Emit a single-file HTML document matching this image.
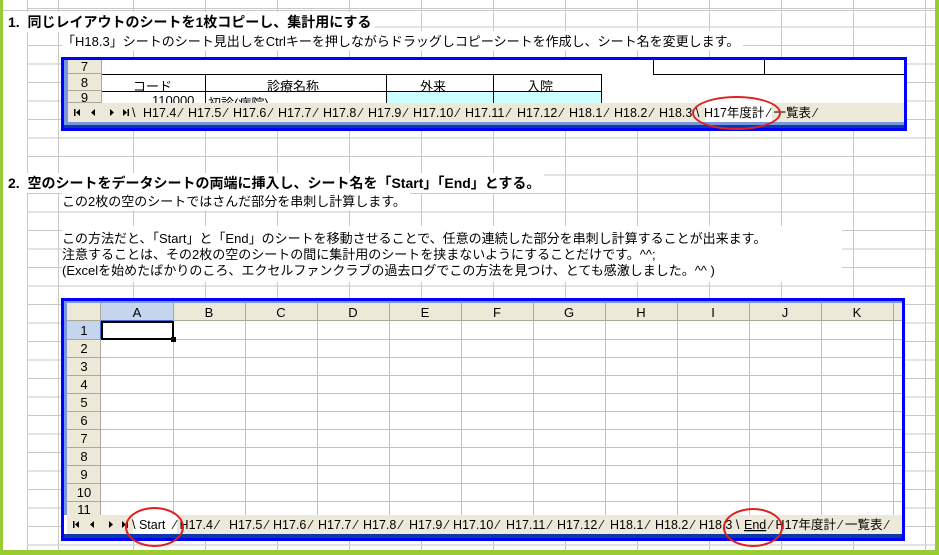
<!DOCTYPE html>
<html><head><meta charset="utf-8"><style>
body{margin:0;width:939px;height:555px;overflow:hidden;background:#fff;position:relative;font-family:"Liberation Sans","Noto Sans CJK JP",sans-serif;}
.abs{position:absolute}
.bg{position:absolute;left:0;top:0;width:939px;height:555px;
background-image:repeating-linear-gradient(to right,transparent 0,transparent 71px,#c8c8c8 71px,#c8c8c8 72px),repeating-linear-gradient(to bottom,transparent 0,transparent 17.5px,#c8c8c8 17.5px,#c8c8c8 18.5px);
background-position:62px 0,0 9px;}
.t{position:absolute;font-size:13px;color:#000;white-space:nowrap;font-family:"Liberation Sans","Noto Sans CJK JP",sans-serif}
.h{font-weight:bold;font-size:14px}
.hdr{background:#ece9d8;border-right:1px solid #aca899;border-bottom:1px solid #aca899;box-sizing:border-box;text-align:center;font-size:13px}
.ell{position:absolute;border:2px solid #e02020;border-radius:50%}
svg text{font-family:"Liberation Sans","Noto Sans CJK JP",sans-serif}
</style></head><body>
<div class="bg"></div>
<div class="abs" style="left:0;top:0;width:27px;height:555px;background:#fff"></div>
<div class="abs" style="left:27px;top:0;width:1px;height:550px;background:#c8c8c8"></div>
<div class="abs" style="left:0;top:0;width:3px;height:555px;background:#99cc33"></div>
<div class="abs" style="left:935px;top:0;width:4px;height:555px;background:#99cc33"></div>
<div class="abs" style="left:0;top:550px;width:939px;height:5px;background:#99cc33"></div>
<div class="abs" style="left:3px;top:10px;width:932px;height:1px;background:#c8c8c8"></div>

<div class="t h" style="left:8px;top:12px;background:#fff;padding-right:4px">1.&nbsp; 同じレイアウトのシートを1枚コピーし、集計用にする</div>
<div class="t" style="left:62px;top:31px;background:#fff;padding-right:4px">「H18.3」シートのシート見出しをCtrlキーを押しながらドラッグしコピーシートを作成し、シート名を変更します。</div>

<!-- top box -->
<div class="abs" style="left:61px;top:57px;width:846px;height:74px;background:#0000ff"></div>
<div class="abs" style="left:64px;top:60px;width:840px;height:68px;background:#fff"></div>
<div class="abs" style="left:64px;top:60px;width:4px;height:62px;background:#7a96df"></div>
<div class="abs hdr" style="left:68px;top:60px;width:34px;height:14px;line-height:14px">7</div>
<div class="abs hdr" style="left:68px;top:74px;width:34px;height:17px;line-height:17px">8</div>
<div class="abs hdr" style="left:68px;top:91px;width:34px;height:12px;line-height:14px;overflow:hidden">9</div>
<div class="abs" style="left:102px;top:74px;width:500px;height:1px;background:#000"></div>
<div class="abs" style="left:102px;top:91px;width:500px;height:1px;background:#000"></div>
<div class="abs" style="left:653px;top:74px;width:251px;height:1px;background:#000"></div>
<div class="abs" style="left:205px;top:74px;width:1px;height:29px;background:#000"></div>
<div class="abs" style="left:386px;top:74px;width:1px;height:29px;background:#000"></div>
<div class="abs" style="left:493px;top:74px;width:1px;height:29px;background:#000"></div>
<div class="abs" style="left:601px;top:74px;width:1px;height:29px;background:#000"></div>
<div class="abs" style="left:653px;top:60px;width:1px;height:14px;background:#000"></div>
<div class="abs" style="left:764px;top:60px;width:1px;height:14px;background:#000"></div>
<div class="abs" style="left:387px;top:92px;width:214px;height:11px;background:#ccffff"></div>
<div class="abs" style="left:493px;top:92px;width:1px;height:11px;background:#000"></div>
<div class="t" style="left:133px;top:76px">コード</div>
<div class="t" style="left:267px;top:76px">診療名称</div>
<div class="t" style="left:420px;top:76px">外来</div>
<div class="t" style="left:527px;top:76px">入院</div>
<div class="abs" style="left:102px;top:92px;width:500px;height:11px;overflow:hidden"><div class="t" style="left:50px;top:1px">110000</div><div class="t" style="left:106px;top:1px">初診(病院)</div></div>
<svg class="abs" style="left:68px;top:103px" width="836" height="19">
<rect width="836" height="19" fill="#ece9d8"/>
<g fill="#000"><rect x="6" y="6" width="1.5" height="7"/><path d="M8 9.5 L12 6 L12 13Z"/><path d="M23 9.5 L27 6 L27 13Z"/><path d="M42 6 L46 9.5 L42 13Z"/><path d="M55 6 L59 9.5 L55 13Z"/><rect x="59.5" y="6" width="1.5" height="7"/></g>
<path d="M637 0 L637 19 L704 19 L704 0" fill="#fff"/>
<g font-size="12.5" fill="#000">
<text x="64" y="14">\</text>
<text x="75" y="14">H17.4 ⁄</text><text x="120" y="14">H17.5 ⁄</text><text x="165" y="14">H17.6 ⁄</text><text x="210" y="14">H17.7 ⁄</text><text x="255" y="14">H17.8 ⁄</text><text x="300" y="14">H17.9 ⁄</text><text x="345" y="14">H17.10 ⁄</text><text x="397" y="14">H17.11 ⁄</text><text x="449" y="14">H17.12 ⁄</text><text x="501" y="14">H18.1 ⁄</text><text x="546" y="14">H18.2 ⁄</text><text x="591" y="14">H18.3 \</text><text x="636" y="14">H17年度計</text><text x="700" y="14">⁄ 一覧表 ⁄</text>
</g></svg>
<div class="abs" style="left:64px;top:122px;width:840px;height:3px;background:#7a96df"></div>
<div class="abs" style="left:64px;top:125px;width:840px;height:3px;background:#0a3aa8"></div>
<div class="ell" style="left:692px;top:96px;width:85px;height:30px"></div>

<div class="t h" style="left:8px;top:173px;background:#fff;padding-right:4px">2.&nbsp; 空のシートをデータシートの両端に挿入し、シート名を「Start」「End」とする。</div>
<div class="t" style="left:62px;top:191px;background:#fff;padding-right:4px">この2枚の空のシートではさんだ部分を串刺し計算します。</div>
<div class="abs" style="left:62px;top:226px;width:780px;height:56px;background:#fff"></div>
<div class="t" style="left:62px;top:228px">この方法だと、「Start」と「End」のシートを移動させることで、任意の連続した部分を串刺し計算することが出来ます。</div>
<div class="t" style="left:62px;top:244px">注意することは、その2枚の空のシートの間に集計用のシートを挟まないようにすることだけです。^^;</div>
<div class="t" style="left:62px;top:260px">(Excelを始めたばかりのころ、エクセルファンクラブの過去ログでこの方法を見つけ、とても感激しました。^^ )</div>

<!-- bottom box -->
<div class="abs" style="left:61px;top:298px;width:844px;height:243px;background:#0000ff"></div>
<div class="abs" style="left:64px;top:301px;width:838px;height:237px;background:#fff"></div>
<div class="abs" style="left:64px;top:301px;width:3px;height:214px;background:#7a96df"></div>
<div class="abs" style="left:64px;top:301px;width:838px;height:2px;background:#7a96df"></div>
<svg class="abs" style="left:67px;top:303px" width="835" height="212">
<rect x="0" y="0" width="835" height="18" fill="#ece9d8"/>
<rect x="0" y="0" width="34" height="212" fill="#ece9d8"/>
<rect x="34" y="0" width="72" height="18" fill="#c5d5ee"/>
<rect x="0" y="18" width="34" height="18" fill="#c5d5ee"/>
<g stroke="#c0c0c0" stroke-width="1">
<line x1="34" y1="36.5" x2="835" y2="36.5"/><line x1="34" y1="54.5" x2="835" y2="54.5"/><line x1="34" y1="72.5" x2="835" y2="72.5"/><line x1="34" y1="90.5" x2="835" y2="90.5"/><line x1="34" y1="108.5" x2="835" y2="108.5"/><line x1="34" y1="126.5" x2="835" y2="126.5"/><line x1="34" y1="144.5" x2="835" y2="144.5"/><line x1="34" y1="162.5" x2="835" y2="162.5"/><line x1="34" y1="180.5" x2="835" y2="180.5"/><line x1="34" y1="198.5" x2="835" y2="198.5"/>
<line x1="106.5" y1="18" x2="106.5" y2="212"/><line x1="178.5" y1="18" x2="178.5" y2="212"/><line x1="250.5" y1="18" x2="250.5" y2="212"/><line x1="322.5" y1="18" x2="322.5" y2="212"/><line x1="394.5" y1="18" x2="394.5" y2="212"/><line x1="466.5" y1="18" x2="466.5" y2="212"/><line x1="538.5" y1="18" x2="538.5" y2="212"/><line x1="610.5" y1="18" x2="610.5" y2="212"/><line x1="682.5" y1="18" x2="682.5" y2="212"/><line x1="754.5" y1="18" x2="754.5" y2="212"/><line x1="826.5" y1="18" x2="826.5" y2="212"/>
</g>
<g stroke="#aca899" stroke-width="1">
<line x1="0" y1="17.5" x2="835" y2="17.5"/><line x1="33.5" y1="0" x2="33.5" y2="212"/>
<line x1="106.5" y1="0" x2="106.5" y2="18"/><line x1="178.5" y1="0" x2="178.5" y2="18"/><line x1="250.5" y1="0" x2="250.5" y2="18"/><line x1="322.5" y1="0" x2="322.5" y2="18"/><line x1="394.5" y1="0" x2="394.5" y2="18"/><line x1="466.5" y1="0" x2="466.5" y2="18"/><line x1="538.5" y1="0" x2="538.5" y2="18"/><line x1="610.5" y1="0" x2="610.5" y2="18"/><line x1="682.5" y1="0" x2="682.5" y2="18"/><line x1="754.5" y1="0" x2="754.5" y2="18"/><line x1="826.5" y1="0" x2="826.5" y2="18"/>
<line x1="0" y1="36.5" x2="34" y2="36.5"/><line x1="0" y1="54.5" x2="34" y2="54.5"/><line x1="0" y1="72.5" x2="34" y2="72.5"/><line x1="0" y1="90.5" x2="34" y2="90.5"/><line x1="0" y1="108.5" x2="34" y2="108.5"/><line x1="0" y1="126.5" x2="34" y2="126.5"/><line x1="0" y1="144.5" x2="34" y2="144.5"/><line x1="0" y1="162.5" x2="34" y2="162.5"/><line x1="0" y1="180.5" x2="34" y2="180.5"/><line x1="0" y1="198.5" x2="34" y2="198.5"/>
</g>
<line x1="34" y1="17.5" x2="106" y2="17.5" stroke="#3a6ad0"/><line x1="33.5" y1="18" x2="33.5" y2="36" stroke="#3a6ad0"/>
<rect x="35" y="19" width="71" height="17" fill="none" stroke="#000" stroke-width="2"/>
<rect x="104" y="34" width="5" height="5" fill="#000"/>
<g font-size="13" text-anchor="middle" fill="#000">
<text x="70" y="14">A</text><text x="142" y="14">B</text><text x="214" y="14">C</text><text x="286" y="14">D</text><text x="358" y="14">E</text><text x="430" y="14">F</text><text x="502" y="14">G</text><text x="574" y="14">H</text><text x="646" y="14">I</text><text x="718" y="14">J</text><text x="790" y="14">K</text>
<text x="17" y="32">1</text><text x="17" y="50">2</text><text x="17" y="68">3</text><text x="17" y="86">4</text><text x="17" y="104">5</text><text x="17" y="122">6</text><text x="17" y="140">7</text><text x="17" y="158">8</text><text x="17" y="176">9</text><text x="17" y="194">10</text><text x="17" y="211">11</text>
</g>
</svg>
<svg class="abs" style="left:67px;top:515px" width="835" height="19">
<rect width="835" height="19" fill="#ece9d8"/>
<g fill="#000"><rect x="6" y="6" width="1.5" height="7"/><path d="M8 9.5 L12 6 L12 13Z"/><path d="M23 9.5 L27 6 L27 13Z"/><path d="M42 6 L46 9.5 L42 13Z"/><path d="M55 6 L59 9.5 L55 13Z"/><rect x="59.5" y="6" width="1.5" height="7"/></g>
<path d="M66 0 L66 19 L110 19 L110 0" fill="#fff"/>
<g font-size="12.5" fill="#000">
<text x="65" y="14">\ Start</text>
<text x="107" y="14">⁄ H17.4 ⁄</text><text x="162" y="14">H17.5 ⁄</text><text x="206" y="14">H17.6 ⁄</text><text x="251" y="14">H17.7 ⁄</text><text x="296" y="14">H17.8 ⁄</text><text x="342" y="14">H17.9 ⁄</text><text x="386" y="14">H17.10 ⁄</text><text x="439" y="14">H17.11 ⁄</text><text x="490" y="14">H17.12 ⁄</text><text x="543" y="14">H18.1 ⁄</text><text x="588" y="14">H18.2 ⁄</text><text x="632" y="14">H18.3 \</text><text x="677" y="14" text-decoration="underline">End</text><text x="703" y="14">⁄ H17年度計 ⁄ 一覧表 ⁄</text>
</g></svg>
<div class="abs" style="left:64px;top:534px;width:838px;height:4px;background:#0a3aa8"></div>
<div class="ell" style="left:125px;top:507px;width:55px;height:36px"></div>
<div class="ell" style="left:723px;top:508px;width:56px;height:35px"></div>
</body></html>
